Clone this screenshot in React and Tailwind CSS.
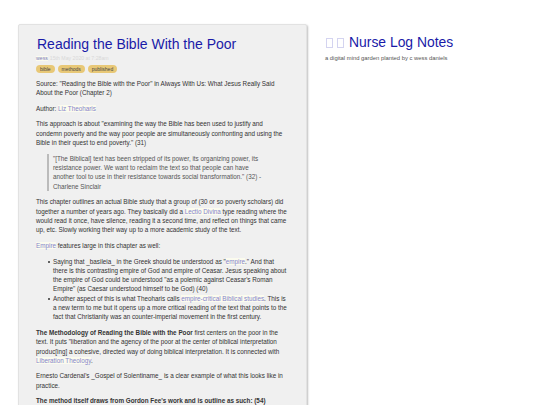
import React from 'react';

const A = ({ children }) => (
    <a className="text-[#8585cc] bg-[#fbfbee]">{children}</a>
);

const Tag = ({ children }) => (
    <span className="bg-[#e8c877] text-[#444] rounded-full px-[4px] h-[8px] flex items-center text-[5px] leading-none">{children}</span>
);

const Bullet = () => (
    <span className="w-[2px] h-[2px] mt-[4px] mr-[3px] rounded-full bg-[#333] shrink-0"></span>
);

const App = () => {
    return (
        <div className="w-[540px] h-[405px] overflow-hidden bg-white flex items-start font-['Liberation_Sans',Arial,sans-serif]">
            {/* Note card */}
            <main className="ml-[18px] mt-[24px] w-[289px] h-[400px] shrink-0 bg-[#f0f0f0] border border-[#e2e2e2] rounded-[2px] shadow-[1px_1px_2px_rgba(0,0,0,0.25)] pl-[17px] pr-[18px] pt-[11px] text-[6.32px] leading-[9.3px] text-[#333]">
                <h1 className="text-[14px] leading-[17px] text-[#1a1aa8] pl-[1px]">Reading the Bible With the Poor</h1>
                <div className="flex items-center gap-[2px] mt-[2px] h-[7px] text-[5.2px] leading-none">
                    <span className="text-[#7a7ab8] bg-[#fbfbee]">wess</span>
                    <span className="text-[#d8d8d8]">15th May 2020 at 7:28am</span>
                </div>
                <div className="flex gap-[3px] mt-[3px]">
                    <Tag>bible</Tag>
                    <Tag>methods</Tag>
                    <Tag>published</Tag>
                </div>
                <p className="mt-[6px]">Source: "Reading the Bible with the Poor" in Always With Us: What Jesus Really Said About the Poor (Chapter 2)</p>
                <p className="mt-[6.3px]">Author: <A>Liz Theoharis</A></p>
                <p className="mt-[6.3px]">This approach is about "examining the way the Bible has been used to justify and condemn poverty and the way poor people are simultaneously confronting and using the Bible in their quest to end poverty." (31)</p>
                <blockquote className="mt-[6.3px] ml-[10.5px] mr-[22px] pl-[4.5px] border-l-2 border-[#bbb] text-[#555]">"[The Biblical] text has been stripped of its power, its organizing power, its resistance power. We want to reclaim the text so that people can have another tool to use in their resistance towards social transformation." (32) - Charlene Sinclair</blockquote>
                <p className="mt-[6.6px]">This chapter outlines an actual Bible study that a group of (30 or so poverty scholars) did together a number of years ago. They basically did a <A>Lectio Divina</A> type reading where the would read it once, have silence, reading it a second time, and reflect on things that came<br />up, etc. Slowly working their way up to a more academic study of the text.</p>
                <p className="mt-[6.3px]"><A>Empire</A> features large in this chapter as well:</p>
                <ul className="mt-[6.3px] pl-[12px]">
                    <li className="flex">
                        <Bullet />
                        <div>Saying that _basileia_ in the Greek should be understood as "<A>empire</A>." And that there is this contrasting empire of God and empire of Ceasar. Jesus speaking about the empire of God could be understood "as a polemic against Ceasar's Roman Empire" (as Caesar understood himself to be God) (40)</div>
                    </li>
                    <li className="flex">
                        <Bullet />
                        <div>Another aspect of this is what Theoharis calls <A>empire-critical Biblical studies</A>. This is a new term to me but it opens up a more critical reading of the text that points to the fact that Christianity was an counter-imperial movement in the first century.</div>
                    </li>
                </ul>
                <p className="mt-[6.3px]"><strong>The Methodology of Reading the Bible with the Poor</strong> first centers on the poor in the text. It puts "liberation and the agency of the poor at the center of biblical interpretation produc[ing] a cohesive, directed way of doing biblical interpretation. It is connected with <A>Liberation Theology</A>.</p>
                <p className="mt-[6.3px]">Ernesto Cardenal's _Gospel of Solentiname_ is a clear example of what this looks like in practice.</p>
                <p className="mt-[6.3px]"><strong>The method itself draws from Gordon Fee's work and is outline as such: (54)</strong></p>
            </main>

            {/* Sidebar */}
            <aside className="ml-[18px] mt-[34px]">
                <h2 className="text-[13.9px] leading-[17px] text-[#1a1aa8] flex items-center">
                    <span className="flex gap-[4px] mr-[5px] ml-[1px]">
                        <span className="w-[7px] h-[10px] border border-[#d4d4f0]"></span>
                        <span className="w-[7px] h-[10px] border border-[#d4d4f0]"></span>
                    </span>
                    Nurse Log Notes
                </h2>
                <p className="mt-[4px] text-[5.85px] leading-[7px] text-[#555]">a digital mind garden planted by c wess daniels</p>
            </aside>
        </div>
    );
};

export default App;
